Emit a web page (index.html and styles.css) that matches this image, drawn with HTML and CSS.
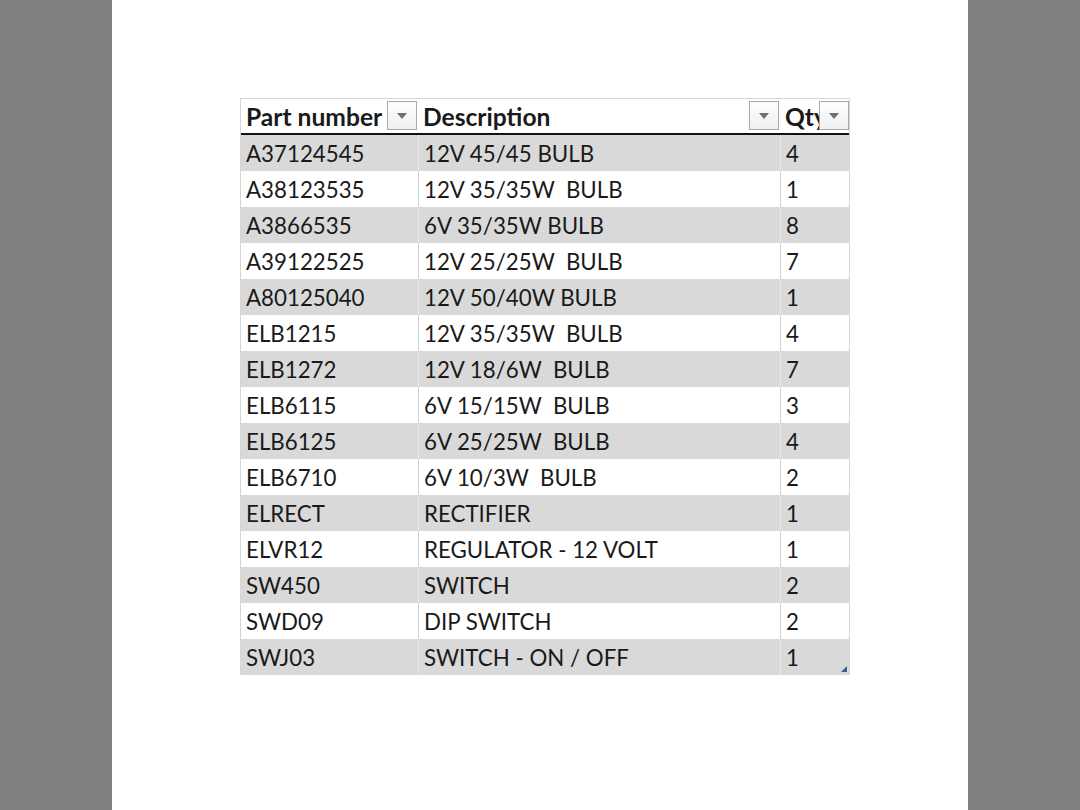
FILE: index.html
```html
<!DOCTYPE html>
<html>
<head>
<meta charset="utf-8">
<link rel="stylesheet" href="styles.css">
</head>
<body>
<div class="page">
  <div class="sheet">
    <div class="tbl">
      <div class="row head">
        <div class="cell c1"><span class="htext">Part number</span><span class="dd"><span class="tri"></span></span></div>
        <div class="cell c2"><span class="htext">Description</span><span class="dd"><span class="tri"></span></span></div>
        <div class="cell c3"><span class="htext">Qty</span><span class="dd"><span class="tri"></span></span></div>
      </div>
      <div class="row band"><div class="cell c1">A37124545</div><div class="cell c2">12V 45/45 BULB</div><div class="cell c3">4</div></div>
      <div class="row"><div class="cell c1">A38123535</div><div class="cell c2">12V 35/35W  BULB</div><div class="cell c3">1</div></div>
      <div class="row band"><div class="cell c1">A3866535</div><div class="cell c2">6V 35/35W BULB</div><div class="cell c3">8</div></div>
      <div class="row"><div class="cell c1">A39122525</div><div class="cell c2">12V 25/25W  BULB</div><div class="cell c3">7</div></div>
      <div class="row band"><div class="cell c1">A80125040</div><div class="cell c2">12V 50/40W BULB</div><div class="cell c3">1</div></div>
      <div class="row"><div class="cell c1">ELB1215</div><div class="cell c2">12V 35/35W  BULB</div><div class="cell c3">4</div></div>
      <div class="row band"><div class="cell c1">ELB1272</div><div class="cell c2">12V 18/6W  BULB</div><div class="cell c3">7</div></div>
      <div class="row"><div class="cell c1">ELB6115</div><div class="cell c2">6V 15/15W  BULB</div><div class="cell c3">3</div></div>
      <div class="row band"><div class="cell c1">ELB6125</div><div class="cell c2">6V 25/25W  BULB</div><div class="cell c3">4</div></div>
      <div class="row"><div class="cell c1">ELB6710</div><div class="cell c2">6V 10/3W  BULB</div><div class="cell c3">2</div></div>
      <div class="row band"><div class="cell c1">ELRECT</div><div class="cell c2">RECTIFIER</div><div class="cell c3">1</div></div>
      <div class="row"><div class="cell c1">ELVR12</div><div class="cell c2">REGULATOR - 12 VOLT</div><div class="cell c3">1</div></div>
      <div class="row band"><div class="cell c1">SW450</div><div class="cell c2">SWITCH</div><div class="cell c3">2</div></div>
      <div class="row"><div class="cell c1">SWD09</div><div class="cell c2">DIP SWITCH</div><div class="cell c3">2</div></div>
      <div class="row band"><div class="cell c1">SWJ03</div><div class="cell c2">SWITCH - ON / OFF</div><div class="cell c3">1</div></div>
      <span class="grip"></span>
    </div>
  </div>
</div>
</body>
</html>
```
FILE: styles.css
```css
html, body {
  margin: 0;
  padding: 0;
}
body {
  background: #808080;
  font-family: Lato, "Open Sans", sans-serif;
  color: #1a1a1a;
}
.page {
  width: 856px;
  height: 810px;
  margin: 0 auto;
  background: #ffffff;
}
.sheet {
  padding-top: 98px;
  padding-left: 128px;
}
.tbl {
  position: relative;
  width: 610px;
  box-sizing: border-box;
  border-left: 1px solid #d6d6d6;
  border-right: 1px solid #d6d6d6;
}
.row {
  display: grid;
  grid-template-columns: 177px 362px 69px;
  height: 36px;
  background: #ffffff;
}
.row.band {
  background: #d9d9d9;
}
.cell {
  box-sizing: border-box;
  padding-left: 5px;
  padding-top: 2px;
  font-size: 22.3px;
  line-height: 34px;
  white-space: pre;
  overflow: hidden;
}
.row .c2, .row .c3 {
  border-left: 1px solid #d2d2d2;
}
.row.band .c2, .row.band .c3 {
  border-left: 1px solid #e9e9e9;
}
.row.head {
  height: 37px;
  box-sizing: border-box;
  border-top: 1px solid #d6d6d6;
  border-bottom: 2px solid #111111;
}
.row.head .cell {
  border-left: none;
  display: flex;
  align-items: flex-start;
  font-weight: bold;
  font-size: 24.6px;
  line-height: 34px;
  padding-top: 1px;
  padding-right: 2px;
}
.row.head .c1 {
  padding-right: 1px;
}
.row.head .c2 {
  padding-right: 1px;
}
.row.head .c3 {
  padding-right: 0;
}
.htext {
  flex: 1;
  min-width: 0;
  overflow: hidden;
}
.dd {
  flex: none;
  width: 30px;
  height: 29px;
  margin-top: 1px;
  box-sizing: border-box;
  border: 1px solid #a9a9a9;
  background: linear-gradient(#fdfdfd, #f1f1f1);
  display: flex;
  align-items: center;
  justify-content: center;
}
.tri {
  width: 0;
  height: 0;
  border-left: 5px solid transparent;
  border-right: 5px solid transparent;
  border-top: 6px solid #707070;
}
.grip {
  position: absolute;
  right: 2px;
  bottom: 3px;
  width: 0;
  height: 0;
  border-left: 6px solid transparent;
  border-bottom: 6px solid #3a5aa0;
}
```
